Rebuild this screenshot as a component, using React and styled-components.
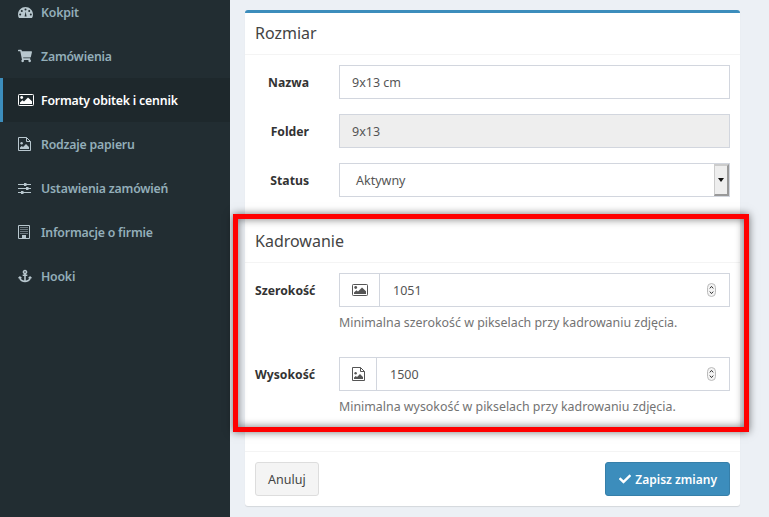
import styled, { createGlobalStyle } from "styled-components";
import { FaShoppingCart, FaAnchor, FaCheck } from "react-icons/fa";

const Global = createGlobalStyle`
  html, body {
    margin: 0;
    height: 100%;
    overflow: hidden;
    background: #ecf0f5;
    font-family: "Noto Sans", "Open Sans", sans-serif;
    font-size: 12.5px;
    color: #333;
  }
  * { box-sizing: border-box; }
`;

const Page = styled.div`
  position: relative;
  display: flex;
  width: 769px;
  height: 517px;
  overflow: hidden;
`;

const Sidebar = styled.nav`
  width: 230px;
  flex: none;
  background: #222d32;
`;

const Menu = styled.ul`
  list-style: none;
  margin: -10px 0 0;
  padding: 0;
`;

const MenuItem = styled.li`
  display: flex;
  align-items: center;
  height: 44px;
  padding-left: 15px;
  border-left: 3px solid ${(p) => (p.$active ? "#3c8dbc" : "transparent")};
  background: ${(p) => (p.$active ? "#1e282c" : "transparent")};
  color: ${(p) => (p.$active ? "#fff" : "#93aeb9")};
  font-weight: 600;
  font-size: 12.3px;
  letter-spacing: -0.2px;
`;

const MenuIcon = styled.span`
  display: flex;
  align-items: center;
  width: 23px;
  flex: none;
  color: ${(p) => (p.$active ? "#fff" : "#b8c7ce")};
  svg.fa {
    width: 14px;
    height: 14px;
  }
`;

const Content = styled.main`
  flex: 1;
  padding: 10px 29px 0 15px;
`;

const Card = styled.section`
  height: 496px;
  background: #fff;
  border-top: 3px solid #3c8dbc;
  border-radius: 3px;
  box-shadow: 0 1px 1px rgba(0, 0, 0, 0.1);
`;

const CardHeader = styled.header`
  height: 42px;
  padding: 0 0 2px 10px;
  display: flex;
  align-items: center;
  border-bottom: 1px solid #f4f4f4;
`;

const CardTitle = styled.h3`
  margin: 0;
  font-size: 16px;
  font-weight: 400;
  color: #444;
`;

const CardBody = styled.div`
  padding: 10px 10px 0;
  display: flex;
  flex-direction: column;
  gap: ${(p) => p.$gap}px;
  height: ${(p) => p.$height}px;
`;

const Row = styled.div`
  display: grid;
  grid-template-columns: 54px 1fr;
  column-gap: 30px;
`;

const Label = styled.label`
  height: 34px;
  display: flex;
  align-items: center;
  justify-content: ${(p) => (p.$left ? "flex-start" : "flex-end")};
  font-weight: 700;
  font-size: 12.2px;
  color: #333;
  white-space: nowrap;
`;

const TextInput = styled.input`
  width: 100%;
  height: 34px;
  padding: 0 12px;
  border: 1px solid #d2d6de;
  background: ${(p) => (p.disabled ? "#eee" : "#fff")};
  font: inherit;
  color: #555;
  opacity: 1;
  outline: none;
`;

const SelectBox = styled.div`
  height: 34px;
  display: flex;
  align-items: center;
  justify-content: space-between;
  padding-left: 16px;
  border: 1px solid #d2d6de;
  color: #555;
`;

const SelectArrow = styled.span`
  width: 15px;
  height: 32px;
  display: flex;
  align-items: center;
  justify-content: center;
  background: #eee;
  border-style: solid;
  border-color: #ccc #999 #999 #ccc;
  border-width: 2px 2px 2px 1px;
  &::after {
    content: "";
    border-top: 4px solid #111;
    border-left: 3.5px solid transparent;
    border-right: 3.5px solid transparent;
  }
`;

const InputGroup = styled.div`
  display: flex;
  align-items: center;
  height: 34px;
  border: 1px solid #d2d6de;
`;

const Addon = styled.span`
  width: ${(p) => p.$width}px;
  height: 100%;
  flex: none;
  display: flex;
  align-items: center;
  justify-content: center;
  border-right: 1px solid #d2d6de;
  color: #555;
`;

const NumberValue = styled.input`
  flex: 1;
  min-width: 0;
  height: 100%;
  padding: 0 13px;
  border: 0;
  font: inherit;
  color: #555;
  outline: none;
`;

const Spinner = styled.svg`
  width: 9px;
  height: 14px;
  margin-right: 13px;
  flex: none;
`;

const Help = styled.p`
  margin: 7px 0 0;
  height: 18px;
  line-height: 18px;
  font-size: 12.4px;
  color: #737373;
  white-space: nowrap;
`;

const CardFooter = styled.footer`
  display: flex;
  justify-content: space-between;
  padding: 10px;
  border-top: 1px solid #f4f4f4;
`;

const Button = styled.button`
  height: 34px;
  padding: 0 12px 0 ${(p) => (p.$primary ? 13 : 12)}px;
  display: flex;
  align-items: center;
  gap: 4px;
  border: 1px solid ${(p) => (p.$primary ? "#367fa9" : "#ddd")};
  border-radius: 3px;
  background: ${(p) => (p.$primary ? "#3c8dbc" : "#f4f4f4")};
  color: ${(p) => (p.$primary ? "#fff" : "#444")};
  font: inherit;
  font-size: ${(p) => (p.$primary ? "12px" : "12.5px")};
  font-weight: ${(p) => (p.$primary ? 600 : 400)};
  svg {
    width: 12px;
    height: 12px;
  }
`;

const Highlight = styled.div`
  position: absolute;
  left: 233px;
  top: 214px;
  width: 516px;
  height: 218px;
  border: 5px solid #f00;
  box-shadow: 0 0 8px rgba(0, 0, 0, 0.55), inset 0 0 8px rgba(0, 0, 0, 0.55);
  pointer-events: none;
`;

const DashboardIcon = () => (
  <svg width="15" height="11" viewBox="0 0 15 11">
    <path
      fill="currentColor"
      fillRule="evenodd"
      d="M7.5 0C3.4 0 0 3.3 0 7.4c0 1.3.4 2.5 1 3.6h13c.6-1.1 1-2.3 1-3.6C15 3.3 11.6 0 7.5 0zM7.5 1.4a1 1 0 1 1 0 2 1 1 0 0 1 0-2zM3.8 2.9a1 1 0 1 1 0 2 1 1 0 0 1 0-2zM11.2 2.9a1 1 0 1 1 0 2 1 1 0 0 1 0-2zM2.2 6.4a1 1 0 1 1 0 2 1 1 0 0 1 0-2zM12.8 6.4a1 1 0 1 1 0 2 1 1 0 0 1 0-2z"
    />
    <path d="M6.6 9.4 7.6 4.4 8.6 9.6z" fill="#222d32" />
  </svg>
);

const PictureIcon = () => (
  <svg width="16" height="12" viewBox="0 0 16 12">
    <rect x="0.5" y="0.5" width="15" height="11" rx="0.8" fill="none" stroke="currentColor" />
    <circle cx="3.7" cy="3.5" r="1.4" fill="currentColor" />
    <path d="M2 10V8.4L4.4 6.2 6 7.6 10 3.4 14 7.2V10z" fill="currentColor" />
  </svg>
);

const FilePictureIcon = () => (
  <svg width="13" height="14" viewBox="0 0 13 14">
    <path d="M.5.5h8l4 4v9H.5z" fill="none" stroke="currentColor" />
    <path d="M8.5.5v4h4" fill="none" stroke="currentColor" />
    <circle cx="3.6" cy="6.2" r="1.2" fill="currentColor" />
    <path d="M2 12v-1.4l1.8-1.6 1.2 1 3-3 3 3V12z" fill="currentColor" />
  </svg>
);

const SlidersIcon = () => (
  <svg width="13" height="11" viewBox="0 0 13 11">
    <path d="M0 1.5h13M0 5.5h13M0 9.5h13" stroke="currentColor" fill="none" />
    <rect x="6" y="0" width="2.5" height="3" fill="currentColor" />
    <rect x="8" y="4" width="2.5" height="3" fill="currentColor" />
    <rect x="3" y="8" width="2.5" height="3" fill="currentColor" />
  </svg>
);

const BuildingIcon = () => (
  <svg width="12" height="14" viewBox="0 0 12 14">
    <path d="M.5.5h11v13H.5z" fill="none" stroke="currentColor" />
    <path
      d="M2.5 2.5h7M2.5 4.5h7M2.5 6.5h7M2.5 8.5h7"
      stroke="currentColor"
      strokeDasharray="1 1"
      fill="none"
    />
    <rect x="4" y="10" width="4" height="3.5" fill="currentColor" />
  </svg>
);

const menu = [
  { label: "Kokpit", icon: <DashboardIcon /> },
  { label: "Zamówienia", icon: <FaShoppingCart className="fa" /> },
  { label: "Formaty obitek i cennik", icon: <PictureIcon />, active: true },
  { label: "Rodzaje papieru", icon: <FilePictureIcon /> },
  { label: "Ustawienia zamówień", icon: <SlidersIcon /> },
  { label: "Informacje o firmie", icon: <BuildingIcon /> },
  { label: "Hooki", icon: <FaAnchor className="fa" /> },
];

function SpinIcon() {
  return (
    <Spinner viewBox="0 0 9 14">
      <rect x="0.5" y="0.5" width="8" height="13" rx="4" fill="#f4f4f4" stroke="#bbb" />
      <path d="M2.8 5.4 4.5 3.4 6.2 5.4M2.8 8.6 4.5 10.6 6.2 8.6" fill="none" stroke="#333" />
    </Spinner>
  );
}

export default function App() {
  return (
    <Page>
      <Global />
      <Sidebar>
        <Menu>
          {menu.map((item) => (
            <MenuItem key={item.label} $active={item.active}>
              <MenuIcon $active={item.active}>{item.icon}</MenuIcon>
              {item.label}
            </MenuItem>
          ))}
        </Menu>
      </Sidebar>
      <Content>
        <Card>
          <CardHeader>
            <CardTitle>Rozmiar</CardTitle>
          </CardHeader>
          <CardBody $height={166} $gap={15}>
            <Row>
              <Label>Nazwa</Label>
              <TextInput defaultValue="9x13 cm" />
            </Row>
            <Row>
              <Label>Folder</Label>
              <TextInput defaultValue="9x13" disabled />
            </Row>
            <Row>
              <Label>Status</Label>
              <SelectBox>
                Aktywny
                <SelectArrow />
              </SelectBox>
            </Row>
          </CardBody>
          <CardHeader>
            <CardTitle>Kadrowanie</CardTitle>
          </CardHeader>
          <CardBody $height={188} $gap={25}>
            <Row>
              <Label $left>Szerokość</Label>
              <div>
                <InputGroup>
                  <Addon $width={40}>
                    <PictureIcon />
                  </Addon>
                  <NumberValue defaultValue="1051" />
                  <SpinIcon />
                </InputGroup>
                <Help>Minimalna szerokość w pikselach przy kadrowaniu zdjęcia.</Help>
              </div>
            </Row>
            <Row>
              <Label $left>Wysokość</Label>
              <div>
                <InputGroup>
                  <Addon $width={37}>
                    <FilePictureIcon />
                  </Addon>
                  <NumberValue defaultValue="1500" />
                  <SpinIcon />
                </InputGroup>
                <Help>Minimalna wysokość w pikselach przy kadrowaniu zdjęcia.</Help>
              </div>
            </Row>
          </CardBody>
          <CardFooter>
            <Button>Anuluj</Button>
            <Button $primary>
              <FaCheck />
              Zapisz zmiany
            </Button>
          </CardFooter>
        </Card>
      </Content>
      <Highlight />
    </Page>
  );
}
